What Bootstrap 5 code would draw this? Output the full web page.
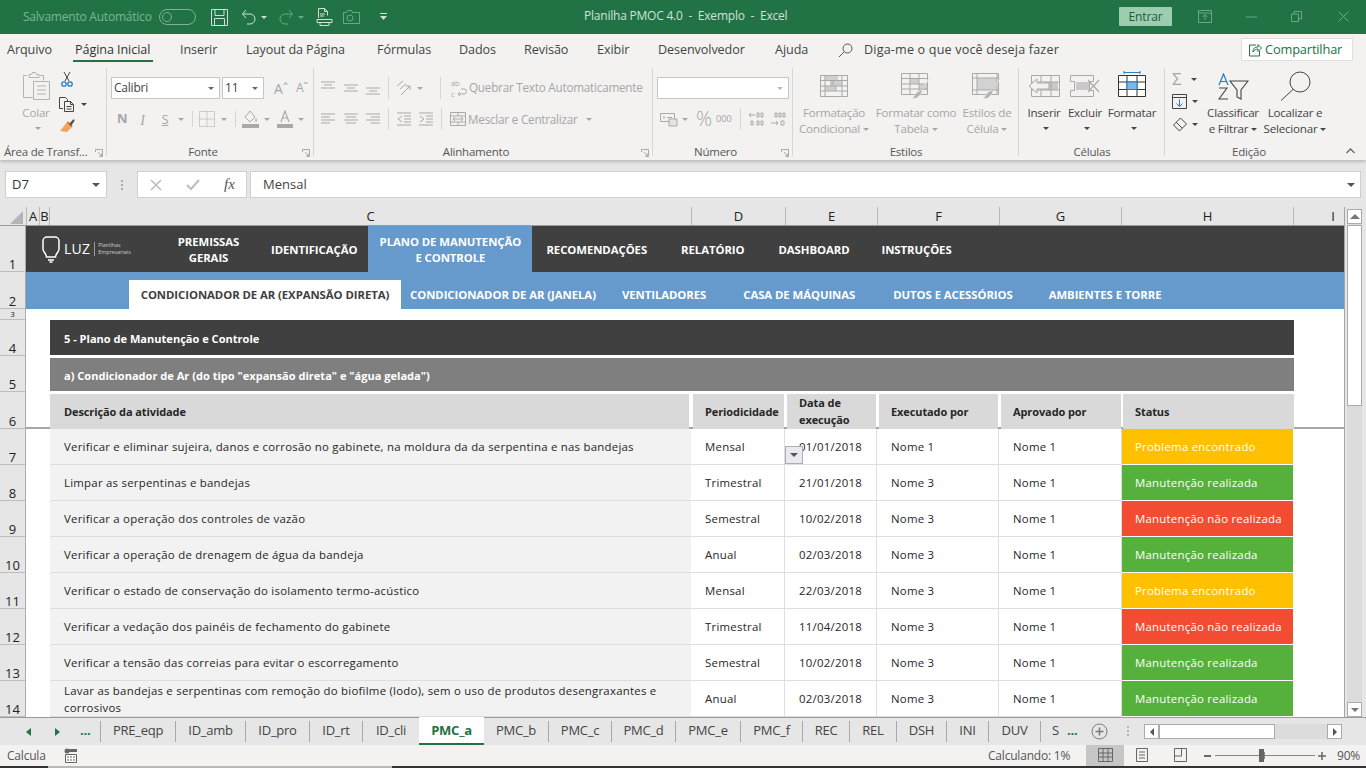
<!DOCTYPE html>
<html lang="pt-BR">
<head>
<meta charset="UTF-8">
<title>Planilha PMOC 4.0 - Exemplo - Excel</title>
<link href="https://cdn.jsdelivr.net/npm/bootstrap@5.3.0/dist/css/bootstrap.min.css" rel="stylesheet">
<style>
html,body{height:100%;overflow:hidden}
body{font-family:"Open Sans","Noto Sans",sans-serif;font-size:12px;color:#333;background:#e6e6e6}
.xl-app{width:1366px;height:768px;overflow:hidden}
svg{display:block;flex:none}
/* title bar */
.title-bar{height:34px;background:#217346;color:#d3e3d9;position:relative}
.tb-auto{margin-left:23px;width:128px;color:#7fb396;letter-spacing:-.22px;font-size:12px;white-space:nowrap}
.tb-toggle{margin-left:8px;width:37px;height:16px;border:1px solid #7fb396;border-radius:8px;padding:2px 2px}
.tb-toggle i{display:block;width:10px;height:10px;border-radius:50%;border:1px solid #7fb396;background:#217346}
.tb-title{position:absolute;left:584px;top:7px;font-size:12px;letter-spacing:-.22px;white-space:pre;color:#cfe2d7}
.tb-entrar{position:absolute;left:1119px;top:7px;width:53px;height:19px;padding:0;border:0;border-radius:1px;background:#9ccdb0;color:#1d5c39;font-size:12px;line-height:19px;letter-spacing:-.1px}
.tb-win{position:absolute;top:10px}
/* ribbon tabs */
.rb-tabs{height:29px;background:#f3f2f1;font-size:12.6px;letter-spacing:-.08px;color:#444;position:relative;white-space:nowrap}
.rb-tab{position:absolute;top:7px}
.rb-tab.on{color:#333}
.rb-tab.on::after{content:"";position:absolute;left:-2px;right:-3px;top:19px;height:2px;background:#217346}
.rb-tell{letter-spacing:.17px}
.rb-share{position:absolute;left:1241px;top:4px;width:112px;height:23px;padding:0 0 0 6px;border:1px solid #e1dfdd;border-radius:1px;background:#fff;color:#217346;font-size:12.8px;letter-spacing:-.15px;display:flex;align-items:center;gap:3px}
/* ribbon body */
.rb-body{height:97px;background:#f3f2f1;box-shadow:0 2px 3px rgba(0,0,0,.18);position:relative;color:#a6a6a6;letter-spacing:-.22px}
.rb-group{flex:none;height:97px;position:relative}
.rb-group::after{content:"";position:absolute;right:0;top:5px;bottom:4px;width:1px;background:#d6d6d6}
.rb-nosep::after{display:none}
.rb-label{position:absolute;left:0;right:0;bottom:0;height:17px;text-align:center;color:#555;font-size:11.5px;line-height:17px}
.rb-lab-shift{padding-right:15px}
.rb-launch{position:absolute;right:4px;bottom:3px}
.rb-line{height:22px;display:flex;align-items:center;margin-top:14px}
.rb-line2{margin-top:9px}
.rb-vsep{width:1px;height:22px;background:#d6d6d6;flex:none}
.rb-text{white-space:nowrap;font-size:11.7px;color:#a6a6a6}
.rb-line2 .rb-text{padding-top:2px}
.rb-caret{width:0;height:0;border-left:3px solid transparent;border-right:3px solid transparent;border-top:3px solid currentColor;flex:none}
.rb-dark{color:#444}
.rb-combo{height:22px;background:#fff;border:1px solid #c6c6c6;display:flex;align-items:center;font-size:12px;color:#444;padding-left:2px;position:relative}
.rb-combo .rb-caret{position:absolute;right:5px;top:9px;color:#666}
.rb-big{display:flex;flex-direction:column;align-items:center;text-align:center;line-height:16px;font-size:11.6px;white-space:nowrap}
.rb-slot{height:42px;padding-top:4px;display:flex;align-items:center;justify-content:center}
.rb-big .rb-caret{display:inline-block;margin-left:3px;vertical-align:middle}
.rb-big-caret{margin-top:6px;display:block}
/* formula bar */
.fx-bar{height:47px;padding:11px 5px 9px;background:#e6e6e6}
.fx-box{height:27px;background:#fff;border:1px solid #cfcfcf;display:flex;align-items:center;position:relative}
.fx-name{width:102px;padding-left:6px;font-size:13px;color:#333}
.fx-grip{width:30px;display:flex;flex-direction:column;align-items:center;justify-content:center;gap:2px;flex:none}
.fx-grip i{width:2px;height:2px;background:#a9a9a9;display:block}
.fx-btns{width:110px;gap:24px;padding:0 0 0 12px;color:#555}
.fx-btns span{font-family:"Liberation Serif",serif;font-style:italic;font-size:15px;margin-left:0}
.fx-input{width:1111px;margin-left:3px;padding-left:12px;font-size:13px;color:#444}
.fx-down{position:absolute;right:5px;top:11px;color:#555}
/* sheet */
.sheet-wrap{height:510px;background:#e6e6e6}
.sheet-main{width:1345px;height:510px;overflow:hidden;border-right:1px solid #a6a6a6}
.col-heads{height:19px;display:flex;font-size:13px;line-height:18px;color:#222;border-bottom:1px solid #9b9b9b;overflow:hidden}
.col-heads span{flex:none;text-align:center;border-left:1px solid #b9b9b9}
.col-corner{width:26px;border-left:0!important;padding:4px 3px 0 10px}
.xl-row{display:flex;flex:none;overflow:hidden}
.row-num{width:26px;flex:none;background:#e6e6e6;border-right:1px solid #ababab;border-bottom:1px solid #bdbdbd;display:flex;align-items:flex-end;justify-content:center;font-size:13px;line-height:14px;color:#222}
.row-num-sm{font-size:8px;line-height:10px}
.row-pane{flex:1;background:#fff;font-size:11.4px;letter-spacing:.25px;color:#262626;min-width:0}
.h46{height:46px}.h37{height:37px}.h11{height:11px}.h36{height:36px}
/* sheet nav */
.lz-nav{background:#404040;height:46px;color:#fff;font-weight:700;line-height:16px;text-align:center}
.lz-logo{width:136px;padding-left:16px;gap:4px;font-weight:400;letter-spacing:0}
.lz-luz{font-size:14px;letter-spacing:.2px}
.lz-sub{font-size:5.4px;line-height:7px;border-left:1px solid #999;padding-left:3px;text-align:left;color:#ccc}
.lz-nav .nav-link,.lz-subnav .nav-link{color:#fff;padding:0;white-space:nowrap;font-size:11.35px;letter-spacing:-.06px}
.lz-nav .nav-link{padding-top:2px}
.lz-on{background:#6699cc;height:46px;width:164px;display:flex;align-items:center;justify-content:center}
.lz-subnav{background:#6699cc;height:37px;font-weight:700;color:#fff;padding-left:103px}
.lz-subnav .nav-link{margin-top:8px;height:29px;line-height:29px}
.lz-subnav .active{background:#fff;color:#404040!important;width:272px;text-align:center}
/* table rows */
.xl-grid{display:grid;grid-template-columns:24px 641px 94px 92px 122px 123px 171px 1fr;height:100%}
.xl-band{margin-left:24px;width:1244px;display:flex;align-items:center;padding:3px 0 0 14px;font-weight:700;color:#fff;font-size:11.05px;letter-spacing:0}
.band-dark{background:#404040;height:35px}
.band-grey{background:#7f7f7f;height:33px;margin-top:2px}
.hd-cell{margin:2px 1px 1px 2px;background:#d9d9d9;display:flex;align-items:center;padding:0 0 2px 12px;font-weight:700;font-size:11px;letter-spacing:-.1px;color:#262626;line-height:17px}
.hd-desc{margin-left:0;margin-right:2px;padding-left:14px}
.hd-h{margin-left:1px;margin-right:0;width:171px}
.hd-line{border-bottom:2px solid #a6a6a6}
.td-cell{display:flex;align-items:center;padding-left:14px;border-right:1px solid #dedede;border-bottom:1px solid #dedede;position:relative;line-height:17px}
.td-desc{background:#f2f2f2;border-right:0}
.td-gut{padding:0;border:0}
.td-end{padding:0;border:0}
.st-cell{color:#fff;padding-left:13px;border:0;border-bottom:1px solid #fff}
.st-y{background:#ffc000}.st-g{background:#55b13c}.st-r{background:#f24d32}
.dv-btn{position:absolute;left:0;top:17px;width:18px;height:18px;background:#e9e9ef;border:1px solid #a9aebb;display:flex;align-items:center;justify-content:center;color:#555}
/* scrollbars */
.v-scroll{width:21px;padding:2px 0 0 2px;flex:none;background:#e6e6e6}
.vs-track{width:15px;height:508px;background:#dcdcdc;display:flex;flex-direction:column}
.vs-btn{width:15px;height:15px;background:#fff;border:1px solid #ababab;display:flex;align-items:center;justify-content:center;color:#777;flex:none}
.vs-thumb{width:15px;height:181px;background:#fff;border:1px solid #ababab;margin-top:1px;flex:none}
/* sheet tabs */
.sh-tabs{height:28px;background:#e6e6e6;border-top:1px solid #9b9b9b;position:relative;font-size:13px;letter-spacing:-.25px;color:#444;white-space:nowrap}
.sh-tab{position:absolute;top:3px;height:21px;line-height:19px;text-align:center;border-right:1px solid #a8a8a8}
.sh-tab.cur{top:-1px;height:28px;background:#fff;color:#217346;font-weight:700;border-right:0;border-bottom:2px solid #217346;line-height:26px}
.sh-sep{border-right:0}
.sh-abs{position:absolute}
.hs-track{position:absolute;left:1144px;top:6px;width:198px;height:15px;background:#dcdcdc;display:flex;justify-content:space-between}
.hs-btn{width:15px;height:15px;background:#fff;border:1px solid #ababab;display:flex;align-items:center;justify-content:center;color:#555}
.hs-thumb{position:absolute;left:15px;top:0;width:116px;height:15px;background:#fff;border:1px solid #ababab}
/* status bar */
.st-bar{height:21px;background:#f3f2f1;position:relative;font-size:12px;letter-spacing:-.2px;color:#555}
.st-abs{position:absolute}
.st-view{position:absolute;left:1086px;top:0;width:38px;height:21px;background:#c6c6c6}
.st-slider{position:absolute;left:1215px;top:10px;width:100px;height:1px;background:#888}
.st-knob{position:absolute;left:44px;top:-6px;width:5px;height:13px;background:#666}
.st-tick{position:absolute;left:49px;top:-3px;width:1px;height:7px;background:#888}
.dk-strip{height:2px;background:#333}
.dk-strip i{display:block;height:2px;margin-left:48px;width:344px;background:#b9b9b9}
</style>
</head>
<body>
<svg width="0" height="0" style="position:absolute">
  <symbol id="al-top" viewBox="0 0 16 16"><path d="M1 2h14M4 5h8M1 8h14" stroke="currentColor" fill="none"/></symbol>
  <symbol id="al-mid" viewBox="0 0 16 16"><path d="M1 5h14M4 8h8M1 11h14" stroke="currentColor" fill="none"/></symbol>
  <symbol id="al-bot" viewBox="0 0 16 16"><path d="M1 8h14M4 11h8M1 14h14" stroke="currentColor" fill="none"/></symbol>
  <symbol id="al-l" viewBox="0 0 16 16"><path d="M1 3h14M1 6h9M1 9h14M1 12h9" stroke="currentColor" fill="none"/></symbol>
  <symbol id="al-c" viewBox="0 0 16 16"><path d="M1 3h14M3 6h10M1 9h14M3 12h10" stroke="currentColor" fill="none"/></symbol>
  <symbol id="al-r" viewBox="0 0 16 16"><path d="M1 3h14M6 6h9M1 9h14M6 12h9" stroke="currentColor" fill="none"/></symbol>
  <symbol id="launch" viewBox="0 0 8 8"><path d="M.5 3V.5h7v7H5M3 3l4 4M4 7h3V4" fill="none" stroke="#a9a9a9"/></symbol>
</svg>
<div class="xl-app d-flex flex-column">

  <!-- title bar -->
  <div class="title-bar d-flex align-items-center">
    <span class="tb-auto">Salvamento Automático</span>
    <span class="tb-toggle"><i></i></span>
    <svg style="margin-left:15px" width="17" height="17" viewBox="0 0 17 17" fill="none" stroke="#cfe2d7"><path d="M.5.500h16v16H.5zM4 .5v6h9v-6M3.500 16.500v-7h10v7"/></svg>
    <svg style="margin-left:13px" width="16" height="16" viewBox="0 0 16 16" fill="none" stroke="#cfe2d7"><path d="M5 1 1.500 5 5 9M2 5h7a5 5 0 0 1 0 10H6"/></svg>
    <span class="rb-caret ms-1" style="color:#cfe2d7"></span>
    <svg style="margin-left:11px" width="16" height="16" viewBox="0 0 16 16" fill="none" stroke="#6da689"><path d="M11 1l3.500 4L11 9M14 5H7a5 5 0 0 0 0 10h3"/></svg>
    <span class="rb-caret ms-1" style="color:#6da689"></span>
    <svg style="margin-left:12px" width="17" height="18" viewBox="0 0 17 18" fill="none" stroke="#cfe2d7"><path d="M2.500 10V.5h6l3 3v4M8.500.5v3h3M4 6h5M4 8h4M1 11.500h15v3H1zM4 14.500v3h9v-3"/></svg>
    <svg style="margin-left:10px" width="17" height="14" viewBox="0 0 17 14" fill="none" stroke="#6da689"><path d="M.5 2.500h3l1-2h4l1 2h7v11H.5z"/><circle cx="7" cy="8" r="3"/></svg>
    <svg style="margin-left:20px" width="7" height="8" viewBox="0 0 7 8" fill="#cfe2d7"><path d="M0 0h7v1H0zM0 3h7L3.500 7z"/></svg>
    <span class="tb-title">Planilha PMOC 4.0  -  Exemplo  -  Excel</span>
    <button class="btn tb-entrar">Entrar</button>
    <svg class="tb-win" style="left:1198px" width="14" height="13" viewBox="0 0 14 13" fill="none" stroke="#6da689"><path d="M.5.500h13v12H.5zM.5 3h13M7 10V5M4.500 7 7 4.500 9.500 7"/></svg>
    <svg class="tb-win" style="left:1246px;top:16px" width="11" height="2" viewBox="0 0 11 2" fill="none" stroke="#6da689"><path d="M0 1h11"/></svg>
    <svg class="tb-win" style="left:1291px;top:11px" width="11" height="11" viewBox="0 0 11 11" fill="none" stroke="#6da689"><path d="M.5 3h7v7.500h-7zM3 3V.5h7.500V8H7.500"/></svg>
    <svg class="tb-win" style="left:1338px;top:11px" width="11" height="11" viewBox="0 0 11 11" fill="none" stroke="#6da689"><path d="M.5.500l10 10M10.500.500l-10 10"/></svg>
  </div>

  <!-- ribbon tabs -->
  <div class="rb-tabs">
    <span class="rb-tab" style="left:7px">Arquivo</span>
    <span class="rb-tab on" style="left:75px">Página Inicial</span>
    <span class="rb-tab" style="left:180px">Inserir</span>
    <span class="rb-tab" style="left:246px">Layout da Página</span>
    <span class="rb-tab" style="left:377px">Fórmulas</span>
    <span class="rb-tab" style="left:459px">Dados</span>
    <span class="rb-tab" style="left:524px">Revisão</span>
    <span class="rb-tab" style="left:597px">Exibir</span>
    <span class="rb-tab" style="left:658px">Desenvolvedor</span>
    <span class="rb-tab" style="left:775px">Ajuda</span>
    <svg class="rb-tab" style="left:838px;top:9px" width="15" height="15" viewBox="0 0 15 15" fill="none" stroke="#555"><circle cx="9.500" cy="5.500" r="4.500"/><path d="M6 9 1 14"/></svg>
    <span class="rb-tab rb-tell" style="left:864px">Diga-me o que você deseja fazer</span>
    <button class="btn rb-share">
      <svg width="14" height="14" viewBox="0 0 14 14" fill="none" stroke="#217346"><path d="M8 2H1.500v11h10V8M5 9c0-4 2-5 5-5V1.500L13.500 5 10 8.500V6C8 6 6 7 5 9z"/></svg>
      Compartilhar
    </button>
  </div>

  <!-- ribbon -->
  <div class="rb-body d-flex">
    <!-- area de transferencia -->
    <div class="rb-group" style="width:107px">
      <div class="d-flex">
        <div class="rb-big" style="width:36px;margin-left:18px">
          <div class="rb-slot"><svg width="27" height="28" viewBox="0 0 27 28" fill="none" stroke="#b3b3b3"><path d="M4 3.500H.5v22h9M17 3.500h3.500v5M6 2.500h2.500l1-2h3l1 2h2.500v3H6z"/><path d="M10.500 9.500h16v18h-16zM14 14h9M14 18h9M14 22h9"/></svg></div>
          <span>Colar</span>
          <span class="rb-caret rb-big-caret"></span>
        </div>
        <div class="d-flex flex-column" style="margin-left:5px;padding-top:9px">
          <svg width="16" height="15" viewBox="0 0 16 15" fill="none" stroke="#444"><path d="M5 0l5 9M11 0 6 9"/><circle cx="5" cy="12" r="2.200" stroke="#1f7fc4" stroke-width="1.300"/><circle cx="11" cy="12" r="2.200" stroke="#1f7fc4" stroke-width="1.300"/></svg>
          <div class="d-flex align-items-center rb-dark" style="margin-top:10px">
            <svg width="16" height="15" viewBox="0 0 16 15" fill="none" stroke="#444"><path d="M4 11.500H.5V.5h6l2 2v2M5.500 4.500h6l3 3v7h-9zM11.500 4.500v3h3M7.500 9.500h5M7.500 12h5"/></svg>
            <span class="rb-caret" style="margin-left:6px"></span>
          </div>
          <svg style="margin-top:7px" width="16" height="15" viewBox="0 0 16 15"><path d="M9 2 14 7 8 13 1 12z" fill="#f4a259"/><path d="M8 3 13 8" stroke="#b5651d"/><path d="M10 5 14 .5h1.500V2L12 7z" fill="#555"/></svg>
        </div>
      </div>
      <div class="rb-label" style="text-align:left;padding-left:4px">Área de Transf...</div>
      <svg class="rb-launch" width="8" height="8"><use href="#launch"/></svg>
    </div>

    <!-- fonte -->
    <div class="rb-group" style="width:207px;padding-left:4px">
      <div class="rb-line" style="gap:2px">
        <div class="rb-combo" style="width:109px">Calibri<span class="rb-caret"></span></div>
        <div class="rb-combo" style="width:42px">11<span class="rb-caret"></span></div>
        <span class="rb-text ms-2" style="font-size:14px;width:20px">Aˆ</span>
        <span class="rb-text" style="font-size:12px">Aˇ</span>
      </div>
      <div class="rb-line rb-line2">
        <b style="font-size:13px;margin-left:6px">N</b>
        <i class="rb-text" style="margin-left:13px;font-family:'Liberation Serif',serif;font-size:14px">I</i>
        <u class="rb-text" style="margin-left:17px;font-size:12.4px">S</u>
        <span class="rb-caret" style="margin-left:10px;margin-right:8px"></span><span class="rb-vsep" style="height:16px"></span>
        <svg style="margin-left:6px" width="16" height="16" viewBox="0 0 16 16" fill="none" stroke="#a9a9a9" stroke-dasharray="1 1"><path d="M.5.500h15v15H.5zM8 .5v15M.5 8h15"/></svg>
        <span class="rb-caret" style="margin-left:6px;margin-right:8px"></span><span class="rb-vsep" style="height:16px"></span>
        <svg style="margin-left:6px" width="17" height="18" viewBox="0 0 17 18"><path d="M8 1 3 7l5 5 5-5z" fill="none" stroke="#a9a9a9"/><path d="M14 8c1 2 1.500 3 0 4-1-1-1-2 0-4z" fill="#a9a9a9"/><path d="M0 14h17v4H0z" fill="#a9a9a9"/></svg>
        <span class="rb-caret" style="margin-left:5px"></span>
        <svg style="margin-left:7px" width="16" height="18" viewBox="0 0 16 18"><path d="M4 12 8 1l4 11M5.500 8h5" fill="none" stroke="#a9a9a9" stroke-width="1.200"/><path d="M0 14h16v4H0z" fill="#a9a9a9"/></svg>
        <span class="rb-caret" style="margin-left:5px"></span>
      </div>
      <div class="rb-label rb-lab-shift">Fonte</div>
      <svg class="rb-launch" width="8" height="8"><use href="#launch"/></svg>
    </div>

    <!-- alinhamento -->
    <div class="rb-group" style="width:339px;padding-left:6px">
      <div class="rb-line" style="color:#a9a9a9">
        <svg width="16" height="16"><use href="#al-top"/></svg>
        <svg style="margin-left:7px" width="16" height="16"><use href="#al-mid"/></svg>
        <svg style="margin-left:6px" width="16" height="16"><use href="#al-bot"/></svg>
        <span class="rb-vsep" style="margin-left:7px;margin-right:6px"></span>
        <svg width="17" height="17" viewBox="0 0 17 17" fill="none" stroke="#a9a9a9"><path d="M2 6 8 1M5 9l6-5M6 15 15 6M15 10V6h-4"/></svg>
        <span class="rb-caret" style="margin-left:5px"></span>
        <span class="rb-vsep" style="margin-left:17px;margin-right:10px"></span>
        <svg width="16" height="22" viewBox="0 0 16 22" fill="none" stroke="#a9a9a9"><text x="0" y="9" font-size="7.500" fill="#a9a9a9" stroke="none" font-family="Open Sans">ab</text><text x="0" y="19.500" font-size="7.500" fill="#a9a9a9" stroke="none" font-family="Open Sans">c</text><path d="M7 17h6a2.500 2.500 0 0 0 0-5h-3M9 15l-2 2 2 2"/></svg>
        <span class="rb-text" style="margin-left:2px">Quebrar Texto Automaticamente</span>
      </div>
      <div class="rb-line rb-line2" style="color:#a9a9a9">
        <svg width="16" height="16"><use href="#al-l"/></svg>
        <svg style="margin-left:7px" width="16" height="16"><use href="#al-c"/></svg>
        <svg style="margin-left:6px" width="16" height="16"><use href="#al-r"/></svg>
        <span class="rb-vsep" style="margin-left:7px;margin-right:7px"></span>
        <svg width="16" height="16" viewBox="0 0 16 16" fill="none" stroke="#a9a9a9"><path d="M1 2h14M1 14h14M8 5h7M8 8h7M8 11h7M6 5 2 8l4 3"/></svg>
        <svg style="margin-left:6px" width="16" height="16" viewBox="0 0 16 16" fill="none" stroke="#a9a9a9"><path d="M1 2h14M1 14h14M8 5h7M8 8h7M8 11h7M2 5l4 3-4 3"/></svg>
        <span class="rb-vsep" style="margin-left:7px;margin-right:8px"></span>
        <svg width="16" height="16" viewBox="0 0 16 16" fill="none" stroke="#a9a9a9"><path d="M.5 1.500h15v13H.5zM.5 5h15M.5 11h15M8 1.500V5M8 11v3.500M3 8h10M5 6 3 8l2 2M11 6l2 2-2 2"/></svg>
        <span class="rb-text" style="margin-left:2px">Mesclar e Centralizar</span>
        <span class="rb-caret" style="margin-left:8px"></span>
      </div>
      <div class="rb-label rb-lab-shift">Alinhamento</div>
      <svg class="rb-launch" width="8" height="8"><use href="#launch"/></svg>
    </div>

    <!-- numero -->
    <div class="rb-group" style="width:140px;padding-left:4px">
      <div class="rb-line">
        <div class="rb-combo" style="width:132px"><span class="rb-caret" style="color:#bbb"></span></div>
      </div>
      <div class="rb-line rb-line2">
        <svg style="margin-left:3px" width="18" height="16" viewBox="0 0 18 16" fill="none" stroke="#a9a9a9"><path d="M.5 2.500h14v8H.5zM4 8V5M7 6.500h5"/><path d="M9 8h8v7H9z" fill="#e4e4e4"/></svg>
        <span class="rb-caret" style="margin-left:4px"></span>
        <span style="font-size:20px;margin-left:8px;line-height:22px;font-weight:300">%</span>
        <span style="font-size:9.500px;margin-left:4px">000</span>
        <span class="rb-vsep" style="margin-left:8px;margin-right:7px"></span>
        <svg width="16" height="18" viewBox="0 0 16 18" fill="none" stroke="#a9a9a9"><path d="M7 5H1M3 3 1 5l2 2M9 3h2v4H9zM13 3h2v4h-2zM3 11h2v4H3zM9 11h2v4H9zM13 11h2v4h-2z"/></svg>
        <svg style="margin-left:6px" width="16" height="18" viewBox="0 0 16 18" fill="none" stroke="#a9a9a9"><path d="M5 3h2v4H5zM9 3h2v4H9zM13 3h2v4h-2zM1 13h7M6 11l2 2-2 2M11 11h3v4h-3z"/></svg>
      </div>
      <div class="rb-label rb-lab-shift">Número</div>
      <svg class="rb-launch" width="8" height="8"><use href="#launch"/></svg>
    </div>

    <!-- estilos -->
    <div class="rb-group d-flex" style="width:226px">
      <div class="rb-big" style="width:82px">
        <div class="rb-slot"><svg width="28" height="22" viewBox="0 0 28 22"><path d="M5 .5h13v5H5zM11 6h11v5H11zM5 11h11v5H5z" fill="#cfcfcf"/><path d="M.5.500h27v21H.5zM.5 5.500h27M.5 11h27M.5 16h27M5 .5v21M22 .5v21M13 5.500V11M11 5.500V11M16 11v5" stroke="#a9a9a9" fill="none"/></svg></div>
        <span>Formatação</span><span>Condicional<i class="rb-caret"></i></span>
      </div>
      <div class="rb-big" style="width:82px">
        <div class="rb-slot"><svg width="30" height="27" viewBox="0 0 30 27"><path d="M9 6h9v5H9zM18 11h8v6h-8z" fill="#cfcfcf"/><path d="M.5.500h26v21H.5zM.5 5.500h26M.5 11h26M.5 16h26M9 .5v21M18 .5v21" stroke="#a9a9a9" fill="none"/><path d="M29 4 19 18l-3 1-2 3-3 4 5-1 4-4 1-3z" fill="#b3b3b3" stroke="#f3f2f1" stroke-width=".5"/></svg></div>
        <span>Formatar como</span><span>Tabela<i class="rb-caret"></i></span>
      </div>
      <div class="rb-big" style="width:60px">
        <div class="rb-slot"><svg width="30" height="27" viewBox="0 0 30 27"><path d="M5 5h20v12H5z" fill="#d2d2d2"/><path d="M.5.500h26v21H.5zM.5 5h26M5 .5v21M.5 17h26M25 .5v21" stroke="#a9a9a9" fill="none"/><path d="M29 4 19 18l-3 1-2 3-3 4 5-1 4-4 1-3z" fill="#b3b3b3" stroke="#f3f2f1" stroke-width=".5"/></svg></div>
        <span>Estilos de</span><span>Célula<i class="rb-caret"></i></span>
      </div>
      <div class="rb-label">Estilos</div>
    </div>

    <!-- celulas -->
    <div class="rb-group d-flex rb-dark" style="width:146px;padding-left:5px">
      <div class="rb-big" style="width:40px">
        <div class="rb-slot"><svg width="32" height="22" viewBox="0 0 32 22"><path d="M16 7h14v8H16z" fill="#c9c9c9"/><path d="M3.500.500h28v21h-28zM3.500 7h28M3.500 15h28M13 .5V7M13 15v6.500M23 .5v21" stroke="#a9a9a9" fill="none"/><path d="M9 4 1 11l8 7v-4h12V8H9z" fill="#f3f2f1" stroke="#a9a9a9"/></svg></div>
        <span>Inserir</span><span class="rb-caret rb-big-caret"></span>
      </div>
      <div class="rb-big" style="width:42px">
        <div class="rb-slot"><svg width="30" height="22" viewBox="0 0 30 22"><path d="M6 7h14v8H6z" fill="#c9c9c9"/><path d="M.5.500h23v6h-4v9h4v6H.5v-6h4v-9h-4z" stroke="#a9a9a9" fill="none"/><path d="m18 5 11 12M29 5 18 17" stroke="#a9a9a9" stroke-width="1.200"/></svg></div>
        <span>Excluir</span><span class="rb-caret rb-big-caret"></span>
      </div>
      <div class="rb-big" style="width:52px">
        <div class="rb-slot" style="padding-top:0"><svg width="28" height="26" viewBox="0 0 28 26"><path d="M6 1.500h16M6 0v3M22 0v3" stroke="#2a7fc1" fill="none"/><path d="M.5 4.500h27v21H.5z" fill="#fff" stroke="#333"/><path d="M.5 11h27M.5 18.500h27M9 4.500v21M19 4.500v21" stroke="#333" fill="none"/><path d="M9 11h10v7.500H9z" fill="#7db7e8" stroke="#2a7fc1"/></svg></div>
        <span>Formatar</span><span class="rb-caret rb-big-caret"></span>
      </div>
      <div class="rb-label">Células</div>
    </div>

    <!-- edicao -->
    <div class="rb-group d-flex rb-dark rb-nosep" style="width:168px;padding-left:7px">
      <div class="d-flex flex-column" style="padding-top:9px;width:30px">
        <div class="d-flex align-items-center" style="height:14px"><span style="font-size:17px;color:#a6a6a6;line-height:14px;width:19px">Σ</span><span class="rb-caret"></span></div>
        <div class="d-flex align-items-center" style="height:14px;margin-top:8px"><svg width="16" height="15" viewBox="0 0 16 15" fill="none"><path d="M.5.500h14v14H.5zM.5 3.500h14" stroke="#444"/><path d="M7.500 5.500v7M4.500 9.500l3 3 3-3" stroke="#1f7fc4"/></svg><span class="rb-caret" style="margin-left:4px"></span></div>
        <div class="d-flex align-items-center" style="height:14px;margin-top:9px"><svg width="15" height="15" viewBox="0 0 15 15" fill="none" stroke="#444"><path d="m8.500 1 6 6-7 7-6-6zM4 5l6 6"/></svg><span class="rb-caret" style="margin-left:5px"></span></div>
      </div>
      <div class="rb-big" style="width:60px;margin-left:1px">
        <div class="rb-slot"><svg width="31" height="27" viewBox="0 0 31 27" fill="none"><path d="M1 12 5.500 1 10 12M3 8.500h5" stroke="#1f7fc4" stroke-width="1.200"/><path d="M1 15h8L1 26h9" stroke="#444" stroke-width="1.100"/><path d="M12 8h18l-7 9v9l-4-2v-7z" stroke="#444" stroke-width="1.100"/></svg></div>
        <span>Classificar</span><span>e Filtrar<i class="rb-caret"></i></span>
      </div>
      <div class="rb-big" style="width:64px">
        <div class="rb-slot"><svg width="31" height="30" viewBox="0 0 31 30" fill="none" stroke="#444"><circle cx="20" cy="11" r="10"/><path d="M13 18.500 1 29.500"/></svg></div>
        <span>Localizar e</span><span>Selecionar<i class="rb-caret"></i></span>
      </div>
      <div class="rb-label">Edição</div>
    </div>
    <svg class="ms-auto align-self-end" style="margin-right:11px;margin-bottom:6px" width="9" height="6" viewBox="0 0 9 6" fill="none" stroke="#666" stroke-width="1.300"><path d="M.5 5 4.500 1l4 4"/></svg>
  </div>

  <!-- formula bar -->
  <div class="fx-bar d-flex">
    <div class="fx-box fx-name">D7<span class="rb-caret fx-down" style="right:6px;border-left-width:4px;border-right-width:4px;border-top-width:4px"></span></div>
    <div class="fx-grip"><i></i><i></i><i></i></div>
    <div class="fx-box fx-btns">
      <svg width="12" height="12" viewBox="0 0 12 12" fill="none" stroke="#bdbdbd" stroke-width="1.600"><path d="m1 1 10 10M11 1 1 11"/></svg>
      <svg width="14" height="12" viewBox="0 0 14 12" fill="none" stroke="#bdbdbd" stroke-width="2"><path d="m1 6 4 4 8-9"/></svg>
      <span>fx</span>
    </div>
    <div class="fx-box fx-input">Mensal<span class="rb-caret fx-down" style="border-left-width:4px;border-right-width:4px;border-top-width:4px"></span></div>
  </div>

  <!-- sheet -->
  <div class="sheet-wrap d-flex">
    <div class="sheet-main">
      <div class="col-heads">
        <span class="col-corner"><svg width="13" height="13" viewBox="0 0 13 13"><path d="M13 0v13H0z" fill="#b5b5b5"/></svg></span>
        <span style="width:13px">A</span><span style="width:10px">B</span><span style="width:642px">C</span><span style="width:94px">D</span><span style="width:92px">E</span><span style="width:122px">F</span><span style="width:122px">G</span><span style="width:172px">H</span><span style="width:79px">I</span>
      </div>

      <div class="xl-row h46"><div class="row-num">1</div>
        <div class="row-pane">
          <ul class="nav lz-nav flex-nowrap align-items-center">
            <li class="d-flex align-items-center lz-logo">
              <svg width="18" height="27" viewBox="0 0 18 27" fill="none" stroke="#fff" stroke-width="1.500"><path d="M5 1h8a4 4 0 0 1 4 4v8c0 3-3 4-3.500 8h-9C4 17 1 16 1 13V5a4 4 0 0 1 4-4zM6 24h6M7.500 26h3"/></svg>
              <span class="lz-luz">LUZ</span>
              <span class="lz-sub">Planilhas<br>Empresariais</span>
            </li>
            <li class="nav-item"><a class="nav-link" style="margin-left:15px;width:63px" href="#">PREMISSAS<br>GERAIS</a></li>
            <li class="nav-item"><a class="nav-link" style="margin-left:31px;margin-right:11px" href="#">IDENTIFICAÇÃO</a></li>
            <li class="nav-item lz-on"><a class="nav-link" href="#">PLANO DE MANUTENÇÃO<br>E CONTROLE</a></li>
            <li class="nav-item"><a class="nav-link" style="margin-left:14px" href="#">RECOMENDAÇÕES</a></li>
            <li class="nav-item"><a class="nav-link" style="margin-left:34px" href="#">RELATÓRIO</a></li>
            <li class="nav-item"><a class="nav-link" style="margin-left:34px" href="#">DASHBOARD</a></li>
            <li class="nav-item"><a class="nav-link" style="margin-left:32px" href="#">INSTRUÇÕES</a></li>
          </ul>
        </div>
      </div>

      <div class="xl-row h37"><div class="row-num">2</div>
        <div class="row-pane">
          <ul class="nav lz-subnav flex-nowrap">
            <li class="nav-item"><a class="nav-link active" href="#">CONDICIONADOR DE AR (EXPANSÃO DIRETA)</a></li>
            <li class="nav-item"><a class="nav-link" style="margin-left:9px" href="#">CONDICIONADOR DE AR (JANELA)</a></li>
            <li class="nav-item"><a class="nav-link" style="margin-left:26px" href="#">VENTILADORES</a></li>
            <li class="nav-item"><a class="nav-link" style="margin-left:37px" href="#">CASA DE MÁQUINAS</a></li>
            <li class="nav-item"><a class="nav-link" style="margin-left:38px" href="#">DUTOS E ACESSÓRIOS</a></li>
            <li class="nav-item"><a class="nav-link" style="margin-left:36px" href="#">AMBIENTES E TORRE</a></li>
          </ul>
        </div>
      </div>

      <div class="xl-row h11"><div class="row-num row-num-sm">3</div><div class="row-pane"></div></div>

      <div class="xl-row h36"><div class="row-num">4</div>
        <div class="row-pane"><div class="xl-band band-dark">5 - Plano de Manutenção e Controle</div></div>
      </div>
      <div class="xl-row h36"><div class="row-num">5</div>
        <div class="row-pane"><div class="xl-band band-grey">a) Condicionador de Ar (do tipo "expansão direta" e "água gelada")</div></div>
      </div>
      <div class="xl-row" style="height:37px"><div class="row-num">6</div>
        <div class="row-pane"><div class="xl-grid hd-line">
          <div></div>
          <div class="hd-cell hd-desc">Descrição da atividade</div>
          <div class="hd-cell">Periodicidade</div>
          <div class="hd-cell">Data de<br>execução</div>
          <div class="hd-cell">Executado por</div>
          <div class="hd-cell">Aprovado por</div>
          <div class="hd-cell hd-h">Status</div>
          <div></div>
        </div></div>
      </div>

      <div class="xl-row h36"><div class="row-num">7</div><div class="row-pane"><div class="xl-grid">
        <div class="td-cell td-gut"></div>
        <div class="td-cell td-desc">Verificar e eliminar sujeira, danos e corrosão no gabinete, na moldura da da serpentina e nas bandejas</div>
        <div class="td-cell">Mensal</div>
        <div class="td-cell">01/01/2018<span class="dv-btn"><span class="rb-caret" style="border-left-width:4px;border-right-width:4px;border-top-width:4px"></span></span></div>
        <div class="td-cell">Nome 1</div>
        <div class="td-cell">Nome 1</div>
        <div class="td-cell st-cell st-y">Problema encontrado</div>
        <div class="td-end"></div>
      </div></div></div>

      <div class="xl-row h36"><div class="row-num">8</div><div class="row-pane"><div class="xl-grid">
        <div class="td-cell td-gut"></div>
        <div class="td-cell td-desc">Limpar as serpentinas e bandejas</div>
        <div class="td-cell">Trimestral</div>
        <div class="td-cell">21/01/2018</div>
        <div class="td-cell">Nome 3</div>
        <div class="td-cell">Nome 1</div>
        <div class="td-cell st-cell st-g">Manutenção realizada</div>
        <div class="td-end"></div>
      </div></div></div>

      <div class="xl-row h36"><div class="row-num">9</div><div class="row-pane"><div class="xl-grid">
        <div class="td-cell td-gut"></div>
        <div class="td-cell td-desc">Verificar a operação dos controles de vazão</div>
        <div class="td-cell">Semestral</div>
        <div class="td-cell">10/02/2018</div>
        <div class="td-cell">Nome 3</div>
        <div class="td-cell">Nome 1</div>
        <div class="td-cell st-cell st-r">Manutenção não realizada</div>
        <div class="td-end"></div>
      </div></div></div>

      <div class="xl-row h36"><div class="row-num">10</div><div class="row-pane"><div class="xl-grid">
        <div class="td-cell td-gut"></div>
        <div class="td-cell td-desc">Verificar a operação de drenagem de água da bandeja</div>
        <div class="td-cell">Anual</div>
        <div class="td-cell">02/03/2018</div>
        <div class="td-cell">Nome 3</div>
        <div class="td-cell">Nome 1</div>
        <div class="td-cell st-cell st-g">Manutenção realizada</div>
        <div class="td-end"></div>
      </div></div></div>

      <div class="xl-row h36"><div class="row-num">11</div><div class="row-pane"><div class="xl-grid">
        <div class="td-cell td-gut"></div>
        <div class="td-cell td-desc">Verificar o estado de conservação do isolamento termo-acústico</div>
        <div class="td-cell">Mensal</div>
        <div class="td-cell">22/03/2018</div>
        <div class="td-cell">Nome 3</div>
        <div class="td-cell">Nome 1</div>
        <div class="td-cell st-cell st-y">Problema encontrado</div>
        <div class="td-end"></div>
      </div></div></div>

      <div class="xl-row h36"><div class="row-num">12</div><div class="row-pane"><div class="xl-grid">
        <div class="td-cell td-gut"></div>
        <div class="td-cell td-desc">Verificar a vedação dos painéis de fechamento do gabinete</div>
        <div class="td-cell">Trimestral</div>
        <div class="td-cell">11/04/2018</div>
        <div class="td-cell">Nome 3</div>
        <div class="td-cell">Nome 1</div>
        <div class="td-cell st-cell st-r">Manutenção não realizada</div>
        <div class="td-end"></div>
      </div></div></div>

      <div class="xl-row h36"><div class="row-num">13</div><div class="row-pane"><div class="xl-grid">
        <div class="td-cell td-gut"></div>
        <div class="td-cell td-desc">Verificar a tensão das correias para evitar o escorregamento</div>
        <div class="td-cell">Semestral</div>
        <div class="td-cell">10/02/2018</div>
        <div class="td-cell">Nome 3</div>
        <div class="td-cell">Nome 1</div>
        <div class="td-cell st-cell st-g">Manutenção realizada</div>
        <div class="td-end"></div>
      </div></div></div>

      <div class="xl-row h36"><div class="row-num">14</div><div class="row-pane"><div class="xl-grid">
        <div class="td-cell td-gut"></div>
        <div class="td-cell td-desc">Lavar as bandejas e serpentinas com remoção do biofilme (lodo), sem o uso de produtos desengraxantes e<br>corrosivos</div>
        <div class="td-cell">Anual</div>
        <div class="td-cell">02/03/2018</div>
        <div class="td-cell">Nome 3</div>
        <div class="td-cell">Nome 1</div>
        <div class="td-cell st-cell st-g">Manutenção realizada</div>
        <div class="td-end"></div>
      </div></div></div>
    </div>

    <div class="v-scroll">
      <div class="vs-track">
        <div class="vs-btn"><span class="rb-caret" style="border-top:0;border-bottom:5px solid #777;border-left-width:5px;border-right-width:5px"></span></div>
        <div class="vs-thumb"></div>
        <div class="vs-btn" style="margin-top:auto"><span class="rb-caret" style="border-left-width:4px;border-right-width:4px;border-top-width:4px"></span></div>
      </div>
    </div>
  </div>

  <!-- sheet tabs -->
  <div class="sh-tabs">
    <svg class="sh-abs" style="left:26px;top:10px" width="5" height="8" viewBox="0 0 5 8" fill="#217346"><path d="M5 0v8L0 4z"/></svg>
    <svg class="sh-abs" style="left:55px;top:10px" width="5" height="8" viewBox="0 0 5 8" fill="#217346"><path d="M0 0v8l5-4z"/></svg>
    <b class="sh-abs" style="left:80px;top:3px;color:#217346">...</b>
    <span class="sh-abs" style="left:100px;top:3px;width:1px;height:21px;background:#a8a8a8"></span>
    <span class="sh-tab" style="left:101px;width:75px">PRE_eqp</span>
    <span class="sh-tab" style="left:176px;width:70px">ID_amb</span>
    <span class="sh-tab" style="left:246px;width:64px">ID_pro</span>
    <span class="sh-tab" style="left:310px;width:53px">ID_rt</span>
    <span class="sh-tab sh-sep" style="left:363px;width:56px">ID_cli</span>
    <span class="sh-tab cur" style="left:419px;width:65px">PMC_a</span>
    <span class="sh-tab" style="left:484px;width:65px">PMC_b</span>
    <span class="sh-tab" style="left:549px;width:63px">PMC_c</span>
    <span class="sh-tab" style="left:612px;width:64px">PMC_d</span>
    <span class="sh-tab" style="left:676px;width:65px">PMC_e</span>
    <span class="sh-tab" style="left:741px;width:62px">PMC_f</span>
    <span class="sh-tab" style="left:803px;width:47px">REC</span>
    <span class="sh-tab" style="left:850px;width:47px">REL</span>
    <span class="sh-tab" style="left:897px;width:50px">DSH</span>
    <span class="sh-tab" style="left:947px;width:42px">INI</span>
    <span class="sh-tab" style="left:989px;width:52px">DUV</span>
    <span class="sh-abs" style="left:1052px;top:3px">S</span>
    <b class="sh-abs" style="left:1067px;top:3px;color:#217346">...</b>
    <svg class="sh-abs" style="left:1091px;top:5px" width="17" height="17" viewBox="0 0 17 17" fill="none" stroke="#777"><circle cx="8.500" cy="8.500" r="7.500"/><path d="M8.500 4.500v8M4.500 8.500h8" stroke-width="1.500"/></svg>
    <span class="sh-abs" style="left:1127px;top:8px;width:2px;height:2px;background:#b5b5b5;box-shadow:0 4px #b5b5b5,0 8px #b5b5b5"></span>
    <div class="hs-track">
      <div class="hs-btn"><span class="rb-caret" style="border:0;border-top:4px solid transparent;border-bottom:4px solid transparent;border-right:4px solid #555"></span></div>
      <div class="hs-thumb"></div>
      <div class="hs-btn"><span class="rb-caret" style="border:0;border-top:4px solid transparent;border-bottom:4px solid transparent;border-left:4px solid #555"></span></div>
    </div>
  </div>

  <!-- status bar -->
  <div class="st-bar">
    <span class="st-abs" style="left:7px;top:2px">Calcula</span>
    <svg class="st-abs" style="left:64px;top:3px" width="14" height="15" viewBox="0 0 14 15"><circle cx="3" cy="3" r="2.500" fill="#666"/><path d="M5 1h8v3H5z" fill="#666"/><path d="M1.500 6.500h11v8h-11z" fill="#fff" stroke="#666"/><path d="M3 9h2M6 9h2M9 9h2M3 12h2M6 12h2M9 12h2" stroke="#666"/></svg>
    <span class="st-abs" style="left:988px;top:2px">Calculando: 1%</span>
    <div class="st-view"></div>
    <svg class="st-abs" style="left:1098px;top:3px" width="15" height="14" viewBox="0 0 15 14" fill="none" stroke="#666"><path d="M.5.500h14v13H.5zM.5 5h14M.5 9h14M5 .5v13M10 .5v13"/></svg>
    <svg class="st-abs" style="left:1136px;top:3px" width="12" height="14" viewBox="0 0 12 14" fill="none" stroke="#666"><path d="M.5.500h11v13H.5zM3 4h6M3 7h6M3 10h6"/></svg>
    <svg class="st-abs" style="left:1174px;top:3px" width="13" height="14" viewBox="0 0 13 14" fill="none" stroke="#666"><path d="M.5.500h12v13H.5zM.5 8h7M7.500 .5V8"/></svg>
    <span class="st-abs" style="left:1204px;top:10px;width:7px;height:2px;background:#666"></span>
    <div class="st-slider"><span class="st-knob"></span><span class="st-tick"></span></div>
    <svg class="st-abs" style="left:1318px;top:7px" width="8" height="8" viewBox="0 0 8 8" fill="none" stroke="#666" stroke-width="1.500"><path d="M4 0v8M0 4h8"/></svg>
    <span class="st-abs" style="left:1337px;top:2px">90%</span>
  </div>
  <div class="dk-strip"><i></i></div>
</div>
</body>
</html>
